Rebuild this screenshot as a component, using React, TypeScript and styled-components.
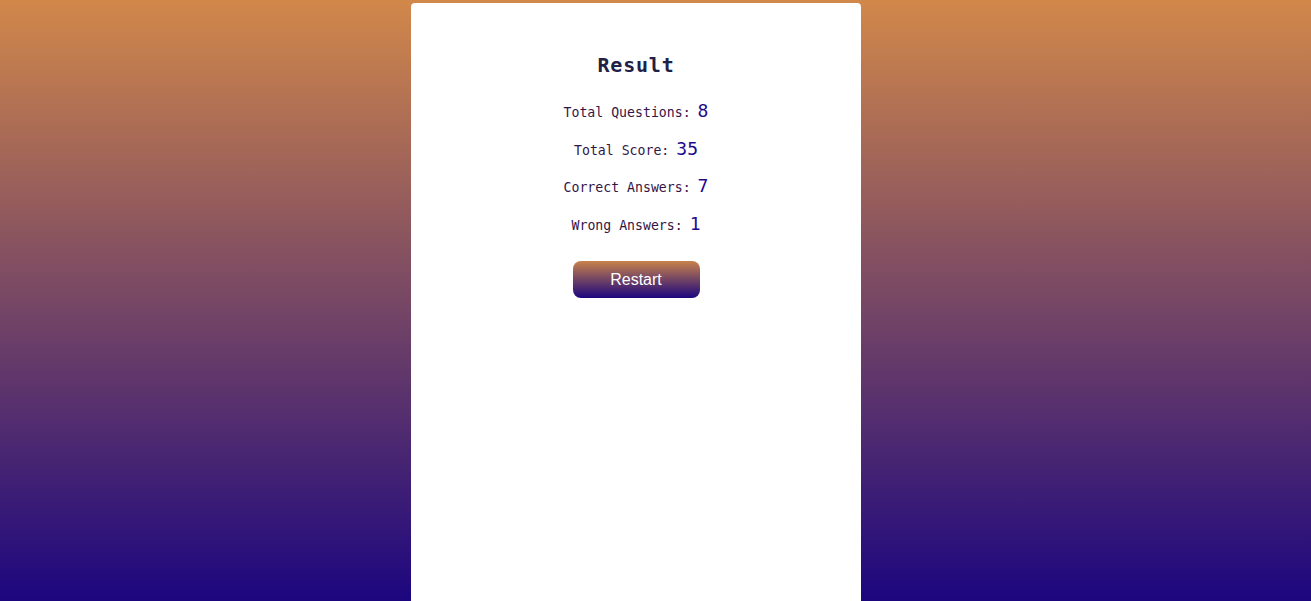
import React from "react";
import styled, { createGlobalStyle } from "styled-components";

const Global = createGlobalStyle`
  html, body { margin: 0; padding: 0; height: 100%; }
  body {
    background: linear-gradient(to bottom, #d2884a 0%, #1c067f 100%);
    background-attachment: fixed;
    min-height: 601px;
    overflow: hidden;
  }
`;

const Page = styled.div`
  display: flex;
  justify-content: center;
  padding: 3px 39px 0 0;
  height: 601px;
  box-sizing: border-box;
`;

const Card = styled.div`
  width: 450px;
  height: 620px;
  background: #ffffff;
  border-radius: 4px;
  display: flex;
  flex-direction: column;
  align-items: center;
  padding-top: 50px;
  box-sizing: border-box;
  font-family: "DejaVu Sans Mono", "Liberation Mono", monospace;
`;

const Title = styled.h2`
  margin: 0 0 22px;
  font-size: 20px;
  font-weight: bold;
  letter-spacing: 0.8px;
  color: #1f2145;
  line-height: 24px;
`;

const Row = styled.p`
  margin: 0 0 14px;
  font-size: 13.2px;
  color: #351546;
  line-height: 23.5px;
  height: 23.5px;
  white-space: nowrap;
`;

const Value = styled.span`
  margin-left: 7px;
  font-size: 18px;
  line-height: 23.5px;
  color: #1e0a8c;
`;

const Button = styled.button`
  margin-top: 12px;
  width: 127px;
  height: 37px;
  border: none;
  border-radius: 8px;
  background: linear-gradient(to bottom, #c8824a, #1c067f);
  color: #ffffff;
  font-family: "Liberation Sans", Arial, sans-serif;
  font-size: 16px;
  cursor: pointer;
`;

const stats = [
  { label: "Total Questions:", value: 8 },
  { label: "Total Score:", value: 35 },
  { label: "Correct Answers:", value: 7 },
  { label: "Wrong Answers:", value: 1 },
];

export default function App() {
  return (
    <>
      <Global />
      <Page>
        <Card>
          <Title>Result</Title>
          {stats.map((s) => (
            <Row key={s.label}>
              {s.label}
              <Value>{s.value}</Value>
            </Row>
          ))}
          <Button>Restart</Button>
        </Card>
      </Page>
    </>
  );
}
